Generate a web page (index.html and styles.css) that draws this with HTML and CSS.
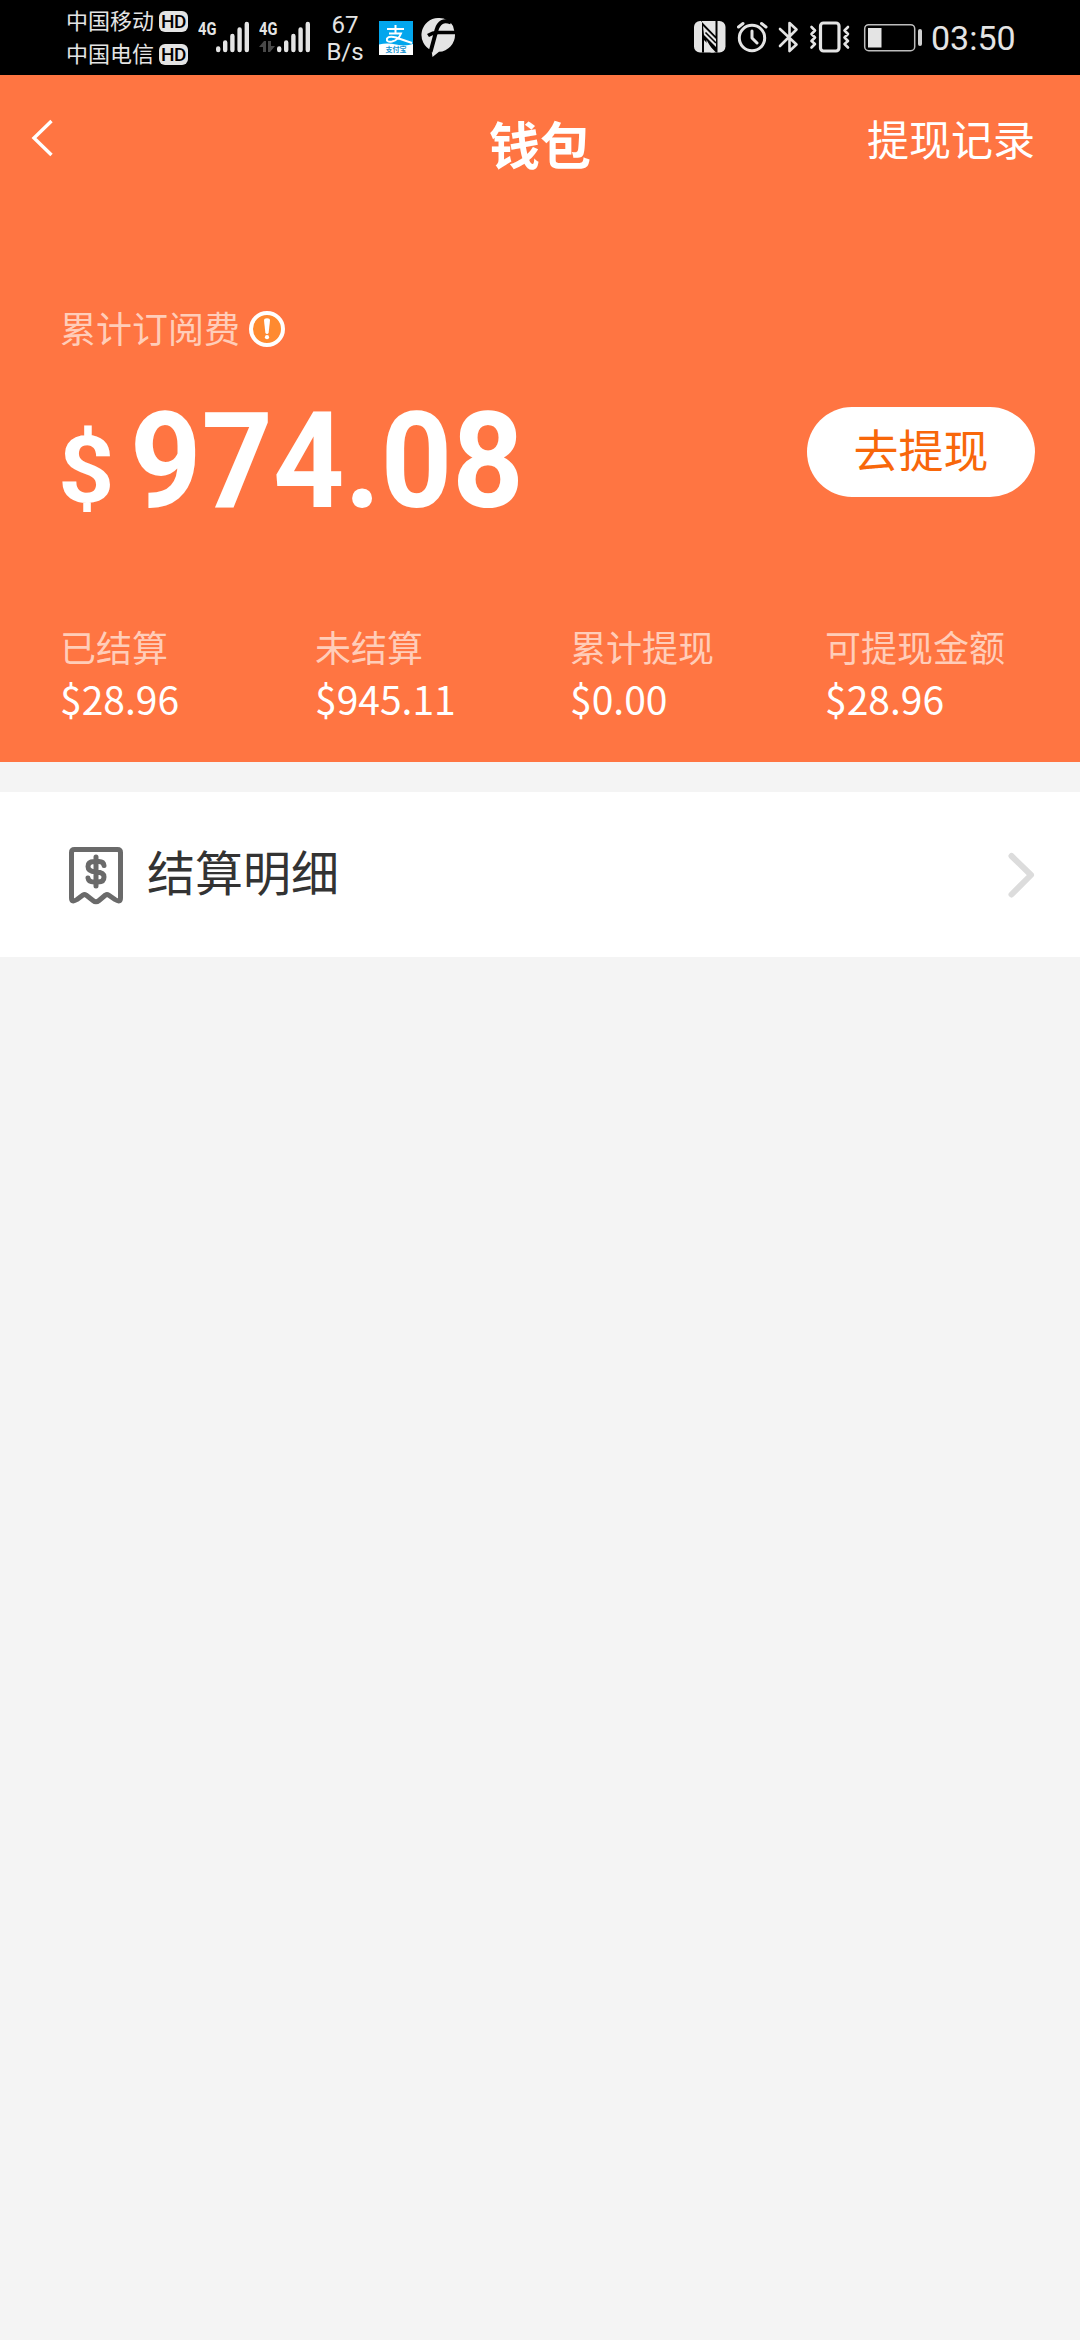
FILE: index.html
```html
<!DOCTYPE html>
<html lang="zh-CN">
<head>
<meta charset="utf-8">
<title>钱包</title>
<link rel="stylesheet" href="styles.css">
</head>
<body>
<div class="status">
  <div class="carriers">
    <div class="carrier">中国移动<span class="hd">HD</span></div>
    <div class="carrier">中国电信<span class="hd">HD</span></div>
  </div>
  <div class="signal first">
    <span class="net">4G</span>
    <svg class="bars" width="34" height="32" viewBox="0 0 34 32"><g stroke="#e4e4e4" stroke-width="4.400" stroke-linecap="round"><path d="M2.2 27.5V29M9.2 21.5V29M16.4 15V29M23.6 8.5V29M30.8 3V29"/></g></svg>
  </div>
  <div class="signal second">
    <span class="net">4G</span>
    <svg class="arrows" width="16" height="12" viewBox="0 0 16 12" fill="#484848"><path d="M5 0H7V11H4V6H0zM9 0h3v5h4l-5 6H9z"/></svg>
    <svg class="bars" width="34" height="32" viewBox="0 0 34 32"><g stroke="#e4e4e4" stroke-width="4.400" stroke-linecap="round"><path d="M2.2 27.5V29M9.2 21.5V29M16.4 15V29M23.6 8.5V29M30.8 3V29"/></g></svg>
  </div>
  <div class="speed"><span>67</span><span>B/s</span></div>
  <svg class="alipay" width="34" height="34" viewBox="0 0 34 34">
    <rect width="34" height="34" fill="#02a6ed"/>
    <path d="M0 23.500Q8 21.500 17 23.500Q27 25.500 34 23V34H0z" fill="#fff"/>
    <path d="M8 8H25M16.500 4V12.500M10 12.500H22Q19.500 19 13 20.500Q7 21.500 8 17.500Q10 14.500 17 16.500L33 22" fill="none" stroke="#fff" stroke-width="2"/>
    <text x="17" y="30.500" text-anchor="middle" class="alipay-name">支付宝</text>
  </svg>
  <svg class="flag" width="35" height="40" viewBox="0 0 35 40">
    <path d="M17 0A17 17 0 0 0 10.500 32.500L11.500 39L18 33.800A17 17 0 0 0 34 16L32 8A17 17 0 0 0 17 0z" fill="#e4e4e4"/>
    <path d="M30 4.500Q19 0 15.500 12L9.500 34" fill="none" stroke="#000" stroke-width="4"/>
    <path d="M7 17.500Q12 14 19 14.500H35" fill="none" stroke="#000" stroke-width="3.400"/>
  </svg>
  <svg class="system" width="232" height="34" viewBox="0 0 232 34">
    <g transform="translate(-692 -20)">
      <rect x="694" y="21" width="31.500" height="31.500" rx="6" fill="#e4e4e4"/>
      <path d="M701 21L715.500 36V21H717.500V52.500H716L704 40V52.500H702V21z" fill="#000"/>
      <path d="M703 26L716 39V47L704 35z" fill="#e4e4e4"/>
      <path d="M705.500 32.500L716 43" stroke="#000" stroke-width="1.600"/>
      <path d="M706.500 40V50L711 52.500H714z" fill="#e4e4e4"/>
      <g fill="none" stroke="#e4e4e4" stroke-width="3" stroke-linecap="round" stroke-linejoin="round">
        <circle cx="752" cy="38" r="12.700"/>
        <path d="M752 31V38L757 43M738.500 27L743 23.500M766 27L761.500 23.500"/>
        <path d="M780 29L796.500 44.500L789.500 51V23L796.500 29.500L780 46" stroke-width="2.600"/>
        <rect x="820.500" y="23" width="18.500" height="28" rx="3" stroke-width="3.200"/>
        <path d="M811.500 27L815 30.500L811.500 34L815 37.500L811.500 41L815 44L811.500 47.500M848 27L844.500 30.500L848 34L844.500 37.500L848 41L844.500 44L848 47.500" stroke-width="2.600"/>
      </g>
      <rect x="864.700" y="24.700" width="50" height="26" rx="4" fill="none" stroke="#bdbdbd" stroke-width="1.500"/>
      <rect x="868" y="28" width="13.500" height="19.500" fill="#e4e4e4"/>
      <rect x="918" y="29" width="4" height="17" rx="2" fill="#d0d0d0"/>
    </g>
  </svg>
  <div class="clock">03:50</div>
</div>

<header class="wallet">
  <nav class="nav">
    <svg class="back" width="23" height="38" viewBox="0 0 23 38"><path d="M20.500 2L3 19L20.500 36" fill="none" stroke="#fff" stroke-width="3.400"/></svg>
    <h1 class="title">钱包</h1>
    <a class="records">提现记录</a>
  </nav>
  <div class="caption">累计订阅费
    <svg class="info" width="36" height="36" viewBox="0 0 36 36"><circle cx="18" cy="18" r="16" fill="#ff8a30" stroke="#fff" stroke-width="4"/><path d="M15 9.500Q15 7.200 18 7.200Q21 7.200 21 9.500L19.600 22Q18 24 16.400 22z" fill="#fff"/><circle cx="18" cy="26.200" r="2.100" fill="#fff"/></svg>
  </div>
  <div class="balance">
    <div class="amount"><span class="currency">$</span><span class="figure">974.08</span></div>
    <button class="withdraw">去提现</button>
  </div>
  <div class="stats">
    <div class="stat"><span class="label">已结算</span><span class="value">$28.96</span></div>
    <div class="stat"><span class="label">未结算</span><span class="value">$945.11</span></div>
    <div class="stat"><span class="label">累计提现</span><span class="value">$0.00</span></div>
    <div class="stat"><span class="label">可提现金额</span><span class="value">$28.96</span></div>
  </div>
</header>

<a class="entry">
  <svg class="receipt" width="56" height="60" viewBox="0 0 56 60" fill="none" stroke="#6a6a6a" stroke-width="5" stroke-linecap="round" stroke-linejoin="round">
    <path d="M5.500 4.500H48.500Q51.500 4.500 51.500 7.500V53Q51.500 58 46 54.500L39.500 50Q38 49 36.500 50L30 55.500Q27 58 24 55.500L17 50Q15.500 49 14 50L8 54.500Q2.500 58 2.500 53V7.500Q2.500 4.500 5.500 4.500z"/>
    <path d="M27 12V41M35 20.500Q34.500 16.500 30 16.500H25Q19 16.500 19 21.500Q19 26.500 27 27Q35 27 35 32Q35 37 29 37H25Q19.500 37 19 33"/>
  </svg>
  <span class="entry-name">结算明细</span>
  <svg class="chevron" width="27" height="46" viewBox="0 0 27 46"><path d="M3.500 4L23 23L3.500 42.500" fill="none" stroke="#dcdcdc" stroke-width="6" stroke-linecap="round" stroke-linejoin="round"/></svg>
</a>
</body>
</html>
```

FILE: styles.css
```css
* { box-sizing: border-box; }
body {
  margin: 0;
  min-height: 2340px;
  background: #f4f4f4;
  font-family: "Noto Sans CJK SC", sans-serif;
}
svg { display: block; flex: none; }

.status {
  display: flex;
  align-items: flex-start;
  height: 75px;
  padding-left: 66px;
  background: #000;
  color: #e4e4e4;
}
.carriers { width: 122px; padding-top: 3px; }
.carrier {
  display: flex;
  align-items: center;
  height: 33px;
  font-size: 22px;
  line-height: 33px;
}
.hd {
  width: 29px;
  height: 21px;
  margin: 3px 0 0 5px;
  border-radius: 6px;
  background: #e4e4e4;
  color: #000;
  font: 500 19px/21px Roboto, sans-serif;
  letter-spacing: -0.5px;
  text-align: center;
}
.signal { display: grid; grid-template-columns: 18px 34px; margin-top: 21px; }
.first { margin-left: 10px; }
.second { margin-left: 9px; }
.net {
  grid-area: 1 / 1;
  font: 700 19px/15px Roboto, sans-serif;
  transform: scaleX(0.77);
  transform-origin: left;
}
.arrows { grid-area: 1 / 1; margin-top: 20px; }
.bars { grid-area: 1 / 2; }
.speed {
  display: flex;
  flex-direction: column;
  align-items: center;
  width: 50px;
  margin-left: 9px;
  padding-top: 12px;
  font: 24px/27px Roboto, sans-serif;
}
.alipay { margin: 21px 0 0 9px; }
.alipay-name { font-size: 7px; font-weight: 700; fill: #1592d0; }
.flag { margin: 18px 0 0 8px; }
.system { margin: 20px 0 0 236px; }
.clock { margin: 18px 0 0 7px; font: 34px/40px Roboto, sans-serif; }

.wallet { height: 687px; background: #ff7542; color: #fff; }
.nav {
  display: grid;
  grid-template-columns: 1fr auto 1fr;
  align-items: center;
  height: 126px;
  padding: 0 45px 0 31px;
}
.title { margin: 9px 0 0 14px; font-size: 51px; font-weight: 700; line-height: 70px; }
.records { justify-self: end; font-size: 42px; line-height: 60px; }
.caption {
  display: flex;
  align-items: center;
  gap: 9px;
  height: 52px;
  margin: 100px 0 0 60px;
  color: #ffcdb9;
  font-size: 36px;
}
.info { margin-top: 4px; }
.balance {
  display: flex;
  justify-content: space-between;
  align-items: center;
  height: 130px;
  margin-top: 34px;
  padding: 0 45px 0 60px;
}
.amount {
  display: flex;
  align-items: baseline;
  padding-top: 34px;
  font-family: Roboto, sans-serif;
  font-weight: 700;
  line-height: 100px;
}
.currency {
  width: 70px;
  margin-left: -2px;
  margin-right: 2px;
  font-size: 92px;
  transform: translateY(-5px) scaleX(1.07);
  transform-origin: left;
}
.figure { font-size: 134px; transform: scaleX(0.93); transform-origin: left; }
.withdraw {
  width: 228px;
  height: 90px;
  padding: 0 0 6px;
  border: 0;
  border-radius: 45px;
  background: #fff;
  color: #f8670a;
  font: 45px/60px "Noto Sans CJK SC", sans-serif;
}
.stats {
  display: grid;
  grid-template-columns: repeat(4, 255px);
  margin-top: 103px;
  padding-left: 60px;
}
.stat { display: flex; flex-direction: column; }
.label { color: #ffcdb9; font-size: 36px; line-height: 52px; }
.value { font-size: 39px; line-height: 52px; }

.entry {
  display: flex;
  align-items: center;
  height: 165px;
  margin-top: 30px;
  padding: 0 45px 0 69px;
  background: #fff;
  color: #333;
}
.entry-name { flex: 1; margin: -10px 0 0 22px; font-size: 48px; line-height: 70px; }
```
